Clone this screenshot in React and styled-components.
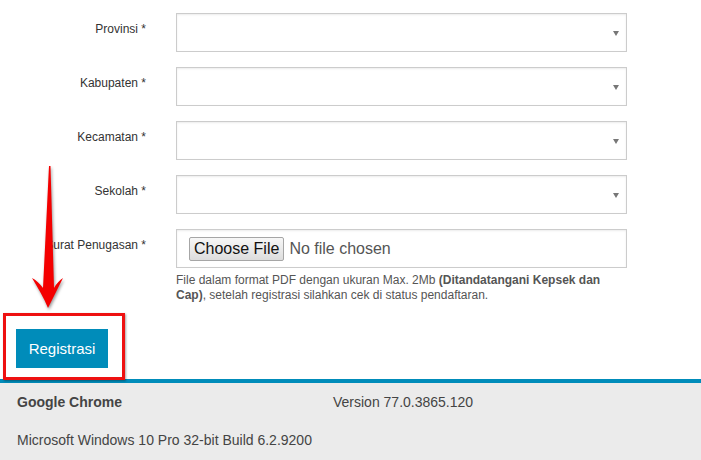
import React from 'react';
import styled, { createGlobalStyle } from 'styled-components';

const GlobalStyle = createGlobalStyle`
  html, body {
    margin: 0;
    padding: 0;
    background: #fff;
    font-family: "Liberation Sans", Arial, sans-serif;
    color: #333;
  }
`;

const fields = ['Provinsi', 'Kabupaten', 'Kecamatan', 'Sekolah'];

const App = () => {
  return (
    <Page>
      <GlobalStyle />
      <Form>
        {fields.map((name) => (
          <React.Fragment key={name}>
            <Label>{name} *</Label>
            <SelectBox role="combobox" aria-label={name}>
              <Caret />
            </SelectBox>
          </React.Fragment>
        ))}
        <Label>Surat Penugasan *</Label>
        <div>
          <FileBox>
            <FileInput type="file" />
          </FileBox>
          <Help>
            File dalam format PDF dengan ukuran Max. 2Mb <b>(Ditandatangani Kepsek dan Cap)</b>, setelah
            registrasi silahkan cek di status pendaftaran.
          </Help>
        </div>
      </Form>
      <Actions>
        <SubmitButton type="button">Registrasi</SubmitButton>
      </Actions>
      <Footer>
        <strong>Google Chrome</strong>
        <span>Version 77.0.3865.120</span>
        <span>Microsoft Windows 10 Pro 32-bit Build 6.2.9200</span>
      </Footer>

      <Highlight />
      <Arrow width="40" height="150" viewBox="0 0 40 150">
        <path
          d="M21 0 L22.5 0 L26 122 C28 118 32 114 35 112 C30 122 25 132 20 142 C16 132 10 122 4 112 C8 114 12 118 15 122 Z"
          fill="#f40000"
        />
      </Arrow>
    </Page>
  );
};

export default App;

const Page = styled.div`
  position: relative;
  width: 701px;
  height: 460px;
  overflow: hidden;
`;

const Form = styled.div`
  display: grid;
  grid-template-columns: 146px 451px;
  column-gap: 30px;
  row-gap: 15px;
  padding-top: 13px;
`;

const Label = styled.label`
  display: block;
  text-align: right;
  font-size: 12px;
  line-height: 17px;
  padding-top: 8px;
  color: #333;
  white-space: nowrap;
`;

const SelectBox = styled.div`
  box-sizing: border-box;
  height: 39px;
  border: 1px solid #ccc;
  box-shadow: inset 0 1px 2px rgba(0, 0, 0, 0.08);
  background: #fff;
  display: flex;
  align-items: center;
  justify-content: flex-end;
  padding-right: 7px;
`;

const Caret = styled.span`
  width: 0;
  height: 0;
  border-left: 3px solid transparent;
  border-right: 3px solid transparent;
  border-top: 5px solid #777;
  margin-top: 1px;
`;

const FileBox = styled.div`
  box-sizing: border-box;
  height: 39px;
  border: 1px solid #ccc;
  box-shadow: inset 0 1px 2px rgba(0, 0, 0, 0.08);
  display: flex;
  align-items: center;
  padding-left: 12px;
`;

const FileInput = styled.input`
  font-family: "Liberation Sans", Arial, sans-serif;
  font-size: 16px;
  color: #555;

  &::file-selector-button {
    font-family: "Liberation Sans", Arial, sans-serif;
    font-size: 16px;
    color: #111;
    height: 24px;
    padding: 0 4px;
    margin-right: 5px;
    border: 1px solid #a6a6a6;
    border-radius: 2px;
    background: linear-gradient(#f7f7f7, #dddddd);
  }
`;

const Help = styled.p`
  margin: 5px 0 0;
  font-size: 12px;
  line-height: 15px;
  color: #555;

  b {
    font-weight: bold;
  }
`;

const Actions = styled.div`
  padding: 26px 0 11px 16px;
`;

const SubmitButton = styled.button`
  display: block;
  width: 92px;
  height: 39px;
  border: 0;
  padding: 0;
  background: #008cba;
  color: #fff;
  font-family: "Liberation Sans", Arial, sans-serif;
  font-size: 15px;
  cursor: pointer;
`;

const Footer = styled.footer`
  border-top: 4px solid #008cba;
  background: #ebebeb;
  display: grid;
  grid-template-columns: 316px 1fr;
  row-gap: 18px;
  padding: 9px 17px 40px;
  font-size: 14px;
  line-height: 20px;
  color: #444;

  strong {
    font-weight: bold;
  }
`;

const Highlight = styled.div`
  position: absolute;
  left: 3px;
  top: 313px;
  width: 122px;
  height: 67px;
  box-sizing: border-box;
  border: 3px solid #ee1111;
  box-shadow: 1px 1px 2px rgba(0, 0, 0, 0.35);
  pointer-events: none;
`;

const Arrow = styled.svg`
  position: absolute;
  left: 28px;
  top: 166px;
  overflow: visible;
  filter: drop-shadow(1px 2px 1.5px rgba(0, 0, 0, 0.4));
  pointer-events: none;
`;
